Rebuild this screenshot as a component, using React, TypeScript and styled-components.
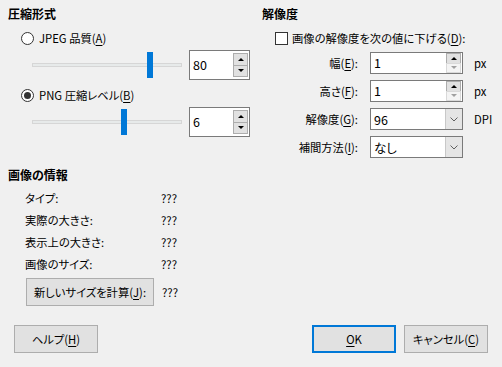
import styled, { createGlobalStyle } from 'styled-components';

const GlobalStyle = createGlobalStyle`
  html, body {
    margin: 0;
    padding: 0;
    background: #f0f0f0;
  }
  body {
    font-family: 'Noto Sans CJK JP', 'Noto Sans', sans-serif;
    font-size: 11.3px;
    color: #000;
    font-feature-settings: 'palt';
  }
  u {
    text-underline-offset: 2px;
  }
`;

const Dialog = styled.div`
  width: 502px;
  height: 367px;
  display: flex;
  flex-direction: column;
  background: #f0f0f0;
  box-sizing: border-box;
`;

const Main = styled.div`
  display: grid;
  grid-template-columns: 254px 240px;
  padding: 6px 0 0 8px;
`;

const Column = styled.div`
  display: flex;
  flex-direction: column;
`;

const Heading = styled.div<{ $gap?: number }>`
  font-weight: bold;
  font-size: 12px;
  line-height: 16px;
  margin-top: ${(p) => p.$gap ?? 0}px;
`;

const OptionRow = styled.label<{ $gap: number }>`
  display: flex;
  align-items: center;
  gap: 5px;
  height: 16px;
  line-height: 16px;
  padding-left: 13px;
  margin-top: ${(p) => p.$gap}px;
`;

const Radio = styled.span<{ $checked?: boolean }>`
  width: 13px;
  height: 13px;
  box-sizing: border-box;
  border: 1px solid #333;
  border-radius: 50%;
  background: #fff;
  display: flex;
  align-items: center;
  justify-content: center;
  &::after {
    content: '';
    width: 7px;
    height: 7px;
    border-radius: 50%;
    background: #333;
    display: ${(p) => (p.$checked ? 'block' : 'none')};
  }
`;

const Check = styled.span`
  width: 13px;
  height: 13px;
  box-sizing: border-box;
  border: 1px solid #333;
  background: #fff;
  margin-right: -1px;
`;

const SliderRow = styled.div<{ $gap: number }>`
  display: flex;
  align-items: center;
  gap: 7px;
  padding-left: 24px;
  margin-top: ${(p) => p.$gap}px;
`;

const Track = styled.div`
  position: relative;
  width: 150px;
  height: 4px;
  box-sizing: border-box;
  background: #e7eaea;
  border: 1px solid #d6d6d6;
`;

const Thumb = styled.div`
  position: absolute;
  top: -12px;
  width: 6px;
  height: 26px;
  background: #0078d7;
`;

const SpinBox = styled.div<{ $w: number; $h: number }>`
  width: ${(p) => p.$w}px;
  height: ${(p) => p.$h}px;
  box-sizing: border-box;
  border: 1px solid #7a7a7a;
  background: #fff;
  display: flex;
  align-items: center;
  padding: 2px 1px 2px 3px;
`;

const Value = styled.span`
  flex: 1;
  line-height: 16px;
  font-size: 12.5px;
`;

const SpinButtons = styled.div<{ $h: number }>`
  width: 15px;
  height: ${(p) => p.$h}px;
  display: flex;
  flex-direction: column;
  align-self: center;
`;

const SpinBtn = styled.div<{ $disabled?: boolean }>`
  flex: 1;
  box-sizing: border-box;
  border: 1px solid ${(p) => (p.$disabled ? '#d9d9d9' : '#adadad')};
  background: ${(p) => (p.$disabled ? '#f4f4f4' : '#e1e1e1')};
  display: flex;
  align-items: center;
  justify-content: center;
  & + & {
    margin-top: -1px;
  }
`;

const Arrow = styled.span<{ $down?: boolean; $disabled?: boolean }>`
  width: 0;
  height: 0;
  border-left: 3px solid transparent;
  border-right: 3px solid transparent;
  ${(p) =>
    p.$down
      ? `border-top: 3px solid ${p.$disabled ? '#a0a0a0' : '#000'};`
      : `border-bottom: 3px solid ${p.$disabled ? '#a0a0a0' : '#000'};`}
`;

const InfoGrid = styled.div`
  display: grid;
  grid-template-columns: 136px auto;
  grid-auto-rows: 22px;
  align-items: center;
  padding-left: 17px;
  margin-top: 4px;
`;

const Button = styled.button<{ $w: number; $default?: boolean }>`
  width: ${(p) => p.$w}px;
  height: 28px;
  box-sizing: border-box;
  font: inherit;
  color: #000;
  background: #e1e1e1;
  border: ${(p) => (p.$default ? '2px solid #0078d7' : '1px solid #adadad')};
  padding: 0;
  line-height: 16px;
`;

const CalcRow = styled.div`
  display: flex;
  align-items: center;
  gap: 8px;
  padding-left: 18px;
  margin-top: 3px;
`;

const FieldGrid = styled.div`
  display: grid;
  grid-template-columns: 96px 93px auto;
  grid-auto-rows: 22px;
  column-gap: 12px;
  row-gap: 6px;
  align-items: center;
  margin-top: 6px;
`;

const FieldLabel = styled.span`
  text-align: right;
  line-height: 16px;
`;

const Unit = styled.span`
  margin-left: -1px;
  line-height: 16px;
`;

const Combo = styled.div`
  height: 22px;
  box-sizing: border-box;
  border: 1px solid #7a7a7a;
  background: #fff;
  display: flex;
  align-items: stretch;
  padding-left: 3px;
`;

const ComboText = styled.span`
  flex: 1;
  display: flex;
  align-items: center;
  font-size: 12.5px;
`;

const DropBtn = styled.span`
  width: 16px;
  background: #e5e5e5;
  border-left: 1px solid #c8c8c8;
  display: flex;
  align-items: center;
  justify-content: center;
`;

const Footer = styled.div`
  margin-top: auto;
  display: flex;
  align-items: center;
  gap: 8px;
  padding: 0 14px 14px 14px;
`;

const Spacer = styled.div`
  flex: 1;
`;

function Slider({ frac }: { frac: number }) {
  return (
    <Track>
      <Thumb style={{ left: Math.round(frac * 144) - 1 }} />
    </Track>
  );
}

function Spin({
  value,
  w,
  h,
  btnH,
  downDisabled,
}: {
  value: string;
  w: number;
  h: number;
  btnH: number;
  downDisabled?: boolean;
}) {
  return (
    <SpinBox $w={w} $h={h}>
      <Value>{value}</Value>
      <SpinButtons $h={btnH}>
        <SpinBtn>
          <Arrow />
        </SpinBtn>
        <SpinBtn $disabled={downDisabled}>
          <Arrow $down $disabled={downDisabled} />
        </SpinBtn>
      </SpinButtons>
    </SpinBox>
  );
}

function ComboBox({ value }: { value: string }) {
  return (
    <Combo>
      <ComboText>{value}</ComboText>
      <DropBtn>
        <svg width="8" height="5" viewBox="0 0 8 5">
          <path d="M0.5 0.5 L4 4 L7.5 0.5" fill="none" stroke="#606060" strokeWidth="1" />
        </svg>
      </DropBtn>
    </Combo>
  );
}

export default function App() {
  return (
    <Dialog>
      <GlobalStyle />
      <Main>
        <Column>
          <Heading>圧縮形式</Heading>
          <OptionRow $gap={8}>
            <Radio />
            <span>
              JPEG 品質(<u>A</u>)
            </span>
          </OptionRow>
          <SliderRow $gap={4}>
            <Slider frac={0.8} />
            <Spin value="80" w={61} h={30} btnH={24} />
          </SliderRow>
          <OptionRow $gap={7}>
            <Radio $checked />
            <span>
              PNG 圧縮レベル(<u>B</u>)
            </span>
          </OptionRow>
          <SliderRow $gap={4}>
            <Slider frac={0.62} />
            <Spin value="6" w={61} h={30} btnH={24} />
          </SliderRow>

          <Heading $gap={30}>画像の情報</Heading>
          <InfoGrid>
            <span>タイプ:</span>
            <span>???</span>
            <span>実際の大きさ:</span>
            <span>???</span>
            <span>表示上の大きさ:</span>
            <span>???</span>
            <span>画像のサイズ:</span>
            <span>???</span>
          </InfoGrid>
          <CalcRow>
            <Button $w={128}>
              新しいサイズを計算(<u>J</u>):
            </Button>
            <span>???</span>
          </CalcRow>
        </Column>

        <Column>
          <Heading>解像度</Heading>
          <OptionRow $gap={8}>
            <Check />
            <span>
              画像の解像度を次の値に下げる(<u>D</u>):
            </span>
          </OptionRow>
          <FieldGrid>
            <FieldLabel>
              幅(<u>E</u>):
            </FieldLabel>
            <Spin value="1" w={93} h={22} btnH={20} downDisabled />
            <Unit>px</Unit>
            <FieldLabel>
              高さ(<u>F</u>):
            </FieldLabel>
            <Spin value="1" w={93} h={22} btnH={20} downDisabled />
            <Unit>px</Unit>
            <FieldLabel>
              解像度(<u>G</u>):
            </FieldLabel>
            <ComboBox value="96" />
            <Unit>DPI</Unit>
            <FieldLabel>
              補間方法(<u>I</u>):
            </FieldLabel>
            <ComboBox value="なし" />
            <span />
          </FieldGrid>
        </Column>
      </Main>

      <Footer>
        <Button $w={84}>
          ヘルプ(<u>H</u>)
        </Button>
        <Spacer />
        <Button $w={84} $default>
          <u>O</u>K
        </Button>
        <Button $w={84}>
          キャンセル(<u>C</u>)
        </Button>
      </Footer>
    </Dialog>
  );
}
